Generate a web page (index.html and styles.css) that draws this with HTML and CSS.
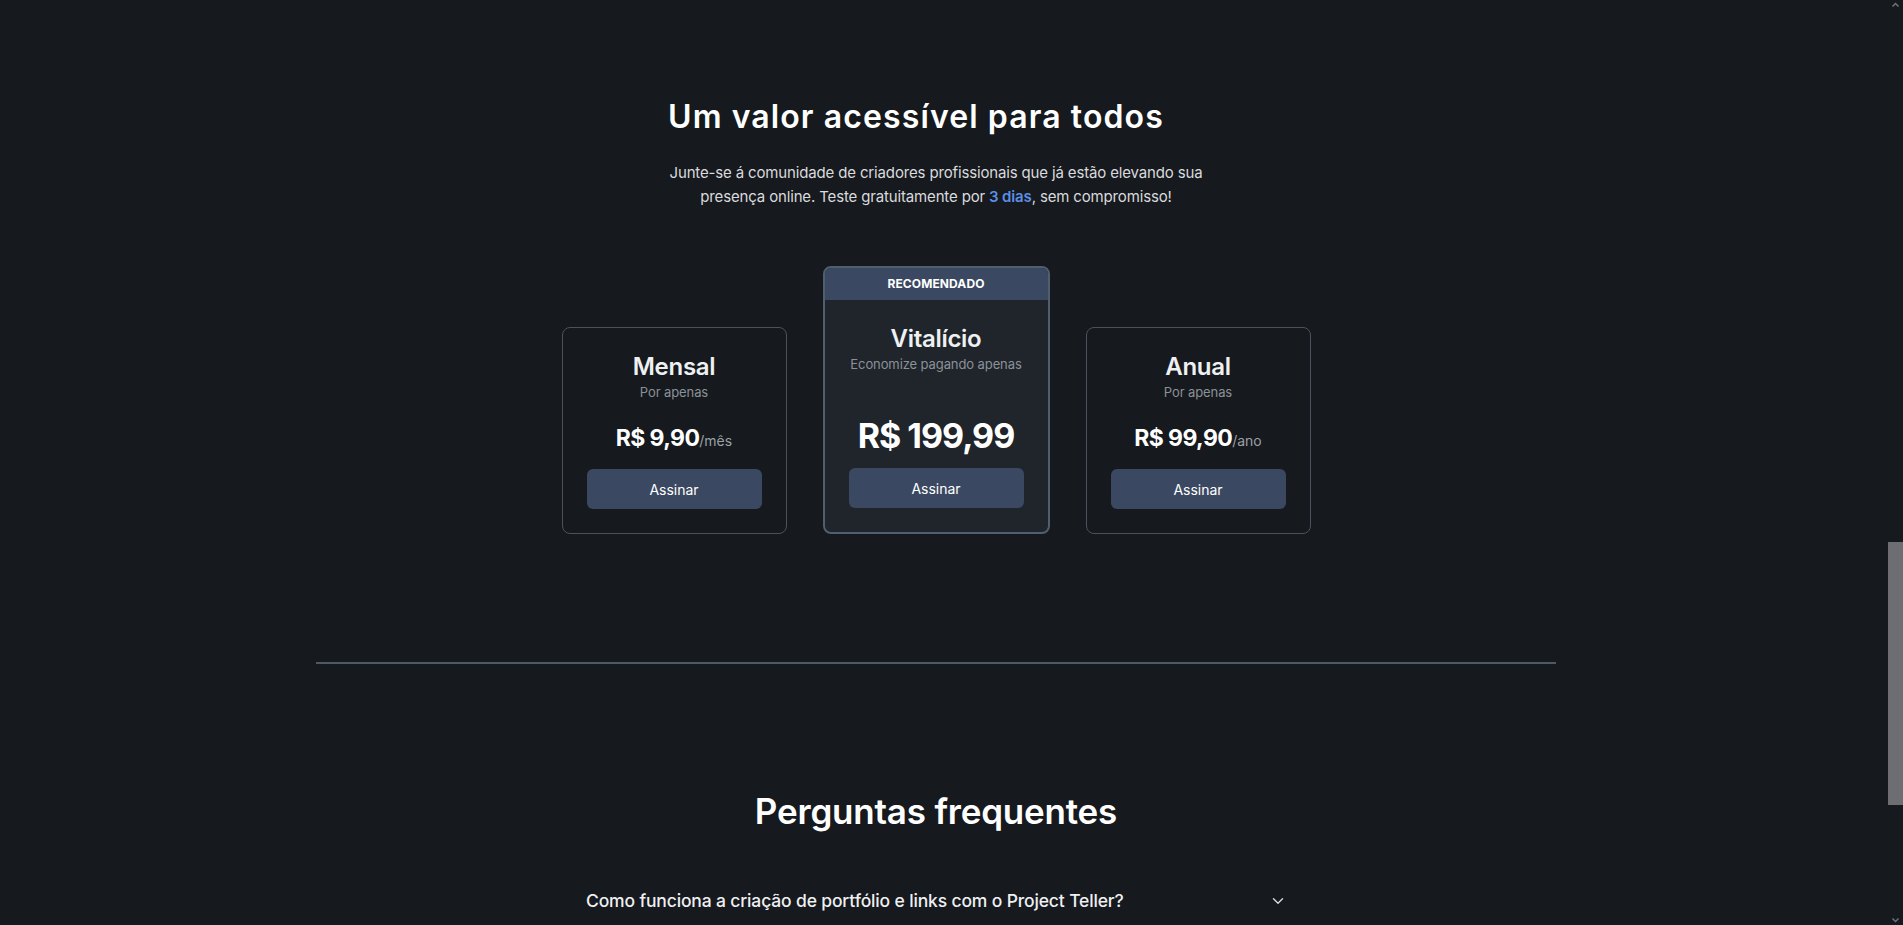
FILE: index.html
```html
<!DOCTYPE html>
<html lang="pt-BR">
<head>
<meta charset="utf-8">
<title>Planos - Project Teller</title>
<link rel="stylesheet" href="styles.css">
</head>
<body>
<main class="page">
  <section class="pricing">
    <div class="pricing-head">
      <h2 class="pricing-title">Um valor acessível para todos</h2>
      <p class="pricing-lead">Junte-se á comunidade de criadores profissionais que já estão elevando sua presença online. Teste gratuitamente por <strong class="accent">3 dias</strong>, sem compromisso!</p>
    </div>
    <div class="plans">
      <article class="plan">
        <h3 class="plan-name">Mensal</h3>
        <p class="plan-note">Por apenas</p>
        <p class="plan-price">R$ 9,90<span class="plan-period">/mês</span></p>
        <button class="plan-btn">Assinar</button>
      </article>
      <article class="plan plan-featured">
        <div class="plan-badge">RECOMENDADO</div>
        <div class="plan-body">
          <h3 class="plan-name">Vitalício</h3>
          <p class="plan-note">Economize pagando apenas</p>
          <p class="plan-price plan-price-big">R$ 199,99</p>
          <button class="plan-btn">Assinar</button>
        </div>
      </article>
      <article class="plan">
        <h3 class="plan-name">Anual</h3>
        <p class="plan-note">Por apenas</p>
        <p class="plan-price">R$ 99,90<span class="plan-period">/ano</span></p>
        <button class="plan-btn">Assinar</button>
      </article>
    </div>
  </section>

  <hr class="divider">

  <section class="faq">
    <h2 class="faq-title">Perguntas frequentes</h2>
    <ul class="faq-list">
      <li class="faq-item">
        <span class="faq-q">Como funciona a criação de portfólio e links com o Project Teller?</span>
        <svg class="faq-chevron" viewBox="0 0 12 8" width="12" height="8"><path d="M1.5 1.8 6 6.2 10.5 1.8" fill="none" stroke="currentColor" stroke-width="1.4" stroke-linecap="round" stroke-linejoin="round"/></svg>
      </li>
      <li class="faq-item">
        <span class="faq-q">Posso cancelar minha assinatura a qualquer momento?</span>
        <svg class="faq-chevron" viewBox="0 0 12 8" width="12" height="8"><path d="M1.5 1.8 6 6.2 10.5 1.8" fill="none" stroke="currentColor" stroke-width="1.4" stroke-linecap="round" stroke-linejoin="round"/></svg>
      </li>
    </ul>
  </section>
</main>

<div class="scrollbar" aria-hidden="true">
  <svg class="sb-arrow sb-up" viewBox="0 0 15 10" width="15" height="10"><path d="M4.5 6.5 7.5 3.5 10.5 6.5" fill="none" stroke="#6f7377" stroke-width="1.5"/></svg>
  <div class="sb-thumb"></div>
  <svg class="sb-arrow sb-down" viewBox="0 0 15 10" width="15" height="10"><path d="M4.5 3.5 7.5 6.5 10.5 3.5" fill="none" stroke="#6f7377" stroke-width="1.5"/></svg>
</div>
</body>
</html>
```

FILE: styles.css
```css
* { box-sizing: border-box; }

html {
  overflow: hidden;
  background: #16191d;
}

body {
  margin: 0;
  padding-right: 15px;
  background: #16191d;
  color: #f2f3f5;
  font-family: "Inter", "Noto Sans", sans-serif;
}

.page {
  padding-right: 16px;
  display: flex;
  flex-direction: column;
  align-items: center;
}

/* ---------- Pricing ---------- */
.pricing {
  padding-top: 98px;
  display: flex;
  flex-direction: column;
  align-items: center;
}

.pricing-head {
  width: 536px;
}

.pricing-title {
  margin: 0;
  font-size: 32px;
  line-height: 38px;
  font-weight: 600;
  letter-spacing: 1.1px;
  color: #ffffff;
  text-align: left;
  white-space: nowrap;
}

.pricing-lead {
  margin: 25px 0 0;
  font-size: 15px;
  line-height: 24px;
  color: #d9dbde;
  text-align: center;
  letter-spacing: -0.15px;
}

.accent {
  color: #5b8ee6;
  font-weight: 600;
}

.plans {
  margin-top: 57px;
  display: flex;
  align-items: flex-end;
  gap: 36px;
}

.plan {
  width: 225px;
  border: 1px solid #4a535d;
  border-radius: 8px;
  padding: 24px;
  text-align: center;
  background: #16191d;
}

.plan-featured {
  width: 227px;
  padding: 0;
  border: 2px solid #4f5f6e;
  background: #20242b;
  overflow: hidden;
}

.plan-badge {
  height: 32px;
  background: #3b4861;
  color: #ffffff;
  font-size: 12px;
  font-weight: 700;
  line-height: 32px;
  letter-spacing: 0.1px;
}

.plan-body {
  padding: 24px;
}

.plan-name {
  margin: 0;
  font-size: 24px;
  line-height: 30px;
  font-weight: 600;
  letter-spacing: -0.3px;
  color: #eef0f2;
}

.plan-note {
  margin: 0;
  font-size: 13px;
  line-height: 20px;
  color: #8b9198;
  letter-spacing: -0.1px;
  white-space: nowrap;
}

.plan-price {
  margin: 20px 0 0;
  font-size: 23px;
  line-height: 32px;
  font-weight: 700;
  letter-spacing: -0.6px;
  color: #ffffff;
}

.plan-price-big {
  margin-top: 42px;
  font-size: 34px;
  line-height: 40px;
  letter-spacing: -1px;
}

.plan-period {
  font-size: 14px;
  font-weight: 400;
  letter-spacing: 0;
  color: #9aa0a7;
}

.plan-btn {
  display: block;
  width: 100%;
  height: 40px;
  margin-top: 12px;
  border: 0;
  border-radius: 6px;
  background: #3b4861;
  color: #ffffff;
  font-family: inherit;
  font-size: 14px;
  font-weight: 400;
}

/* ---------- Divider ---------- */
.divider {
  width: 1240px;
  height: 2px;
  margin: 128px 0 0;
  border: 0;
  background: #4a5b65;
}

/* ---------- FAQ ---------- */
.faq {
  display: flex;
  flex-direction: column;
  align-items: center;
}

.faq-title {
  margin: 126px 0 0;
  font-size: 35px;
  line-height: 42px;
  font-weight: 600;
  letter-spacing: -0.2px;
  color: #ffffff;
}

.faq-list {
  list-style: none;
  margin: 55px 0 0;
  padding: 0;
  width: 704px;
}

.faq-item {
  display: flex;
  align-items: center;
  justify-content: space-between;
  padding: 0 4px 0 2px;
  height: 28px;
  margin-bottom: 40px;
}

.faq-q {
  font-size: 17.5px;
  line-height: 28px;
  font-weight: 500;
  letter-spacing: -0.15px;
  color: #eef0f2;
}

.faq-chevron {
  color: #d8dadd;
  flex: none;
}

/* ---------- Fake scrollbar (page is scrolled) ---------- */
.scrollbar {
  position: fixed;
  top: 0;
  right: 0;
  width: 15px;
  height: 100vh;
  background: #16191d;
}

.sb-arrow {
  position: absolute;
  left: 0;
}

.sb-up { top: 0; }
.sb-down { bottom: 0; }

.sb-thumb {
  position: absolute;
  top: 542px;
  left: 0;
  width: 15px;
  height: 263px;
  background: #6d6e72;
}
```
